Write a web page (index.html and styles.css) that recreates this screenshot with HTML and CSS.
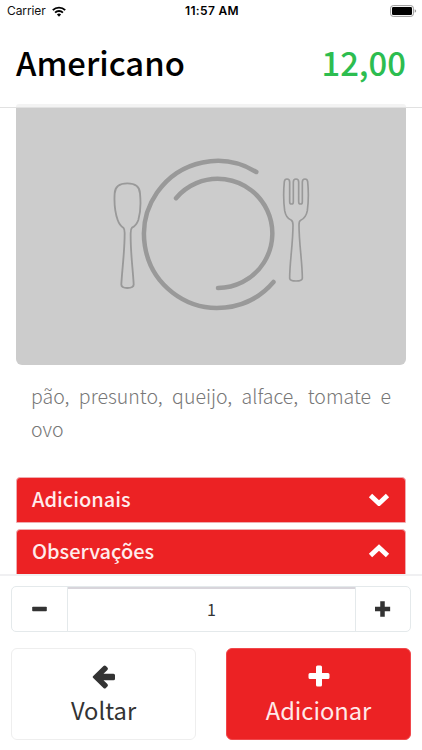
FILE: index.html
```html
<!DOCTYPE html>
<html lang="pt-BR">
<head>
<meta charset="utf-8">
<meta name="viewport" content="width=device-width, initial-scale=1">
<title>Americano</title>
<link rel="stylesheet" href="styles.css">
</head>
<body>
<div class="status">
  <div class="carrier"><span>Carrier</span>
    <svg class="wifi" width="14" height="11" viewBox="0 0 14 11" fill="none" stroke="#000" stroke-width="1.9"><path d="M.8 4.2a8.8 8.8 0 0 1 12.4 0M3.1 6.6a5.5 5.5 0 0 1 7.8 0"/><path d="M7 10.7 4.9 8.6a3 3 0 0 1 4.2 0z" fill="#000" stroke="none"/></svg>
  </div>
  <div class="time">11:57 AM</div>
  <svg class="battery" width="27" height="12" viewBox="0 0 27 12"><rect x=".6" y=".6" width="22.8" height="10.8" rx="2.6" fill="none" stroke="#999"/><rect x="2" y="2" width="20" height="8" rx="1.2"/><path d="M24.7 4.2v3.6q1.5-.5 1.5-1.8t-1.5-1.8z" fill="#999"/></svg>
</div>
<header class="header">
  <div class="heading"><h1>Americano</h1><span class="price">12,00</span></div>
  <div class="photo-edge"></div>
</header>
<main class="content">
  <svg class="photo" width="390" height="257" viewBox="16 108 390 257" fill="none" stroke="#999" stroke-linecap="round" stroke-linejoin="round">
    <g stroke-width="4.5">
      <path d="M256.300 172A73.500 73.500 0 1 0 273.500 282"/>
      <path d="M176 198.2A54.6 54.6 0 1 1 218 288"/>
    </g>
    <g transform="translate(100 145) scale(.33333)" stroke-width="5.5">
      <path d="M82 115C59 115 45 124 44 145C42 176 46 205 53 225C58 239 65 245 70 248Q74 252 74 264C74 320 67 365 64 417Q63 429 82 429Q102 429 101 417C98 365 91 320 92 264Q92 252 96 248C103 245 110 239 115 225C121 205 123 176 120 145C119 124 105 115 82 115Z"/>
    </g>
    <g transform="translate(205 145) scale(.33333)" stroke-width="5">
      <path d="M238 110Q239 102 246 102Q254 102 254 111V170Q254 177 260 177Q265 177 265 170V111Q265 102 273 102Q281 102 281 111V170Q281 177 287 177Q292 177 292 170V111Q292 102 300 102Q307 102 308 110C311 140 310 174 307 197C304 213 296 222 287 226Q282 228 282 240C282 297 292 350 292 400Q291 408 273 408Q255 408 254 400C254 350 264 297 264 240Q264 228 258 225C249 222 242 213 239 197C236 174 235 140 238 110Z"/>
    </g>
  </svg>
  <p class="description">pão, presunto, queijo, alface, tomate e ovo</p>
  <div class="accordion">
    <div class="panel"><span>Adicionais</span><svg width="22" height="14" viewBox="0 0 22 14"><path d="m2.500 3.500 8.500 8 8.500-8"/></svg></div>
    <div class="panel"><span>Observações</span><svg width="22" height="14" viewBox="0 0 22 14"><path d="m2.500 11.500 8.500-8 8.500 8"/></svg></div>
  </div>
</main>
<footer class="footer">
  <div class="quantity">
    <div class="step"><svg width="16" height="16" viewBox="0 0 16 16"><rect x=".2" y="5.800" width="14.600" height="4.400" rx=".8"/></svg></div>
    <div class="amount">1</div>
    <div class="step"><svg width="16" height="16" viewBox="0 0 16 16"><path d="M7.500 2.600v10.800M2.100 8h10.800" stroke="#333" stroke-width="4.500" stroke-linecap="square"/></svg></div>
  </div>
  <div class="actions">
    <div class="button back"><svg width="24" height="24" viewBox="0 0 24 24"><path d="M1 12.800q-.7-.8 0-1.600L11.500 1q1.200-1 2.400 0l1.500 1.500q1.200 1.200 0 2.400L11.500 8.700h10q1.500 0 1.500 1.500v3.600q0 1.500-1.500 1.500h-10l3.900 3.800q1.200 1.200 0 2.400L13.900 23q-1.200 1-2.400 0z" fill="#333"/></svg><span>Voltar</span></div>
    <div class="button add"><svg width="24" height="24" viewBox="0 0 24 24"><path d="M9 2Q9 .500 10.500 .500h3Q15 .500 15 2v6h6q1.500 0 1.500 1.500v3q0 1.500-1.500 1.500h-6v6q0 1.500-1.500 1.500h-3Q9 21.500 9 20v-6H3q-1.500 0-1.500-1.500v-3Q1.500 8 3 8h6z" fill="#fff"/></svg><span>Adicionar</span></div>
  </div>
</footer>
</body>
</html>
```
FILE: styles.css
```css
* { box-sizing: border-box; }
body {
  margin: 0;
  width: 422px;
  height: 750px;
  overflow: hidden;
  display: flex;
  flex-direction: column;
  background: #fff;
  color: #333;
  font-family: "Noto Sans CJK SC", "Noto Sans", sans-serif;
}
.status {
  height: 22px;
  padding: 0 5px 0 7px;
  display: grid;
  grid-template-columns: 1fr auto 1fr;
  align-items: center;
  color: #111;
  font: 12px/22px Inter, sans-serif;
}
.carrier { display: flex; align-items: center; gap: 6px; letter-spacing: -.1px; }
.time { font-weight: 600; color: #000; letter-spacing: .35px; }
.battery { justify-self: end; }
.header {
  height: 86px;
  border-bottom: 1px solid #e1e1e1;
  display: flex;
  flex-direction: column;
  justify-content: space-between;
}
.heading {
  height: 80px;
  padding: 0 16px;
  display: flex;
  justify-content: space-between;
  align-items: center;
  font-size: 32.800px;
  line-height: 48px;
  color: #000;
}
h1, .price { margin: 0; font-size: inherit; font-weight: 500; }
.price { color: #2dbd50; }
.photo-edge { height: 3px; margin: 0 16px; background: #f3f3f3; border-radius: 5px 5px 0 0; }
.content { height: 466px; overflow: hidden; padding: 0 16px; }
.photo { display: block; background: #ccc; border-radius: 0 0 6px 6px; }
.description {
  margin: 14px 15px 0;
  height: 98px;
  font-size: 19.500px;
  line-height: 33px;
  font-weight: 300;
  text-align: justify;
  color: #777;
}
.accordion { display: flex; flex-direction: column; gap: 6px; }
.panel {
  height: 46px;
  padding: 0 15px 2px;
  display: flex;
  align-items: center;
  justify-content: space-between;
  background: #ec2224;
  border: 1px solid #efabb0;
  border-radius: 4px 4px 1px 1px;
  color: #ffecec;
  font-size: 20px;
  line-height: 30px;
  font-weight: 500;
}
.panel svg { fill: none; stroke: #fff; stroke-width: 4.800; }
.footer {
  height: 176px;
  padding: 10px 11px;
  border-top: 2px solid #f0f0f2;
  display: flex;
  flex-direction: column;
  gap: 16px;
}
.quantity {
  height: 46px;
  display: grid;
  grid-template-columns: 55px 1fr 54px;
  border: 1px solid #e4e9eb;
  border-radius: 5px;
}
.step { display: flex; align-items: center; justify-content: center; fill: #333; }
.amount {
  border: solid #e4e9eb;
  border-width: 0 1px;
  box-shadow: inset 0 2px #d8d5db;
  text-align: center;
  font-size: 16px;
  line-height: 44px;
}
.actions { display: grid; grid-template-columns: 185px 185px; justify-content: space-between; }
.button {
  height: 92px;
  border: 1px solid #eee;
  border-radius: 6px;
  display: flex;
  flex-direction: column;
  align-items: center;
  padding-top: 16px;
  font-size: 23.700px;
  line-height: 36px;
}
.button span { margin-top: 3px; }
.add { background: #ec2224; border-color: #f0474b; color: #ffe9e9; }
```
